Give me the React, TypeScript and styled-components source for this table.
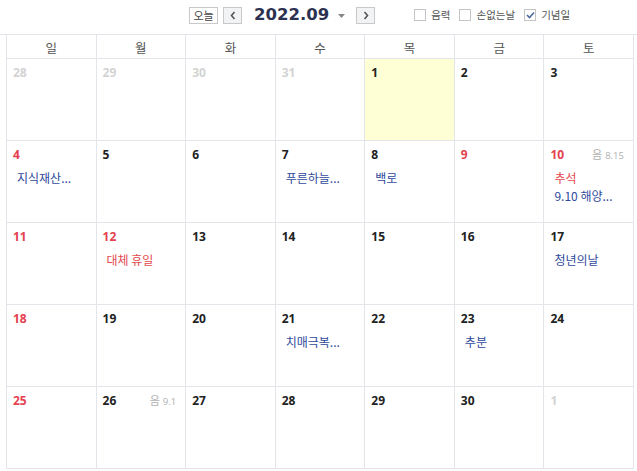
import React from 'react';
import styled, { createGlobalStyle } from 'styled-components';

const GlobalStyle = createGlobalStyle`
  html, body { margin: 0; padding: 0; background: #fff; }
  body { font-family: "Open Sans", "Noto Sans CJK KR", sans-serif; color: #222; }
  * { box-sizing: border-box; }
`;

const LINE = '#e3e5ea';

const Page = styled.div`
  width: 637px;
  height: 471px;
  overflow: hidden;
  background: #fff;
`;

const Toolbar = styled.div`
  height: 35px;
  padding: 0 0 4px 189px;
  border-bottom: 1px solid ${LINE};
  display: flex;
  align-items: center;
`;

const TodayButton = styled.button`
  width: 29px;
  height: 17px;
  padding: 0;
  border: 1px solid #c9c9c9;
  background: #fff;
  color: #444;
  font-family: "Noto Sans CJK KR", sans-serif;
  font-size: 11px;
  line-height: 15px;
`;

const NavButton = styled.button<{ $gap: number }>`
  width: 19px;
  height: 17px;
  padding: 0;
  margin-left: ${(p) => p.$gap}px;
  border: 1px solid #c9c9c9;
  background: #f2f3f5;
  display: flex;
  align-items: center;
  justify-content: center;
`;

const Title = styled.div`
  margin-left: 12px;
  display: flex;
  align-items: center;
  font-family: "DejaVu Sans", sans-serif;
  font-weight: bold;
  font-size: 16.5px;
  color: #2c3150;
  line-height: 20px;
`;

const Caret = styled.svg`
  margin-left: 9px;
  margin-top: 1px;
`;

const Checks = styled.div`
  margin-left: 39px;
  display: flex;
  align-items: center;
  gap: 9px;
`;

const CheckItem = styled.label`
  display: flex;
  align-items: center;
  gap: 5px;
  font-family: "Noto Sans CJK KR", sans-serif;
  font-size: 10.5px;
  color: #555;
  line-height: 14px;
`;

const Box = styled.span`
  width: 12px;
  height: 12px;
  border: 1px solid #c4c4c4;
  background: #fff;
  display: flex;
  align-items: center;
  justify-content: center;
`;

const Calendar = styled.div`
  margin-left: 6px;
  width: 628px;
  border-left: 1px solid ${LINE};
`;

const WeekHeader = styled.div`
  display: grid;
  grid-template-columns: repeat(7, 1fr);
  height: 24px;
  border-bottom: 1px solid ${LINE};
`;

const WeekDay = styled.div`
  border-right: 1px solid ${LINE};
  text-align: center;
  font-family: "Noto Sans CJK KR", sans-serif;
  font-size: 12.5px;
  color: #555;
  line-height: 25px;
`;

const Grid = styled.div`
  display: grid;
  grid-template-columns: repeat(7, 1fr);
  grid-auto-rows: 82px;
`;

const Cell = styled.div<{ $today?: boolean }>`
  border-right: 1px solid ${LINE};
  border-bottom: 1px solid ${LINE};
  background: ${(p) => (p.$today ? '#ffffd6' : '#fff')};
  padding: 5px 6px 0 6px;
  overflow: hidden;
`;

const NumberRow = styled.div`
  display: flex;
  justify-content: space-between;
  align-items: flex-start;
  height: 18px;
`;

type Tone = 'normal' | 'red' | 'other';

const DayNum = styled.span<{ $tone: Tone }>`
  font-family: "Open Sans", sans-serif;
  font-weight: bold;
  font-size: 12px;
  line-height: 18px;
  color: ${(p) => (p.$tone === 'red' ? '#e4424f' : p.$tone === 'other' ? '#d3d3d3' : '#222')};
`;

const Lunar = styled.span`
  margin-right: 3px;
  font-family: "Noto Sans CJK KR", sans-serif;
  font-size: 11px;
  line-height: 16px;
  color: #b0b0b0;
  display: flex;
  align-items: baseline;
  gap: 3px;
`;

const LunarDate = styled.span`
  font-family: "Open Sans", sans-serif;
  font-size: 9.5px;
`;

const Events = styled.div`
  margin-top: 5px;
  padding-left: 4px;
`;

const Event = styled.div<{ $red?: boolean }>`
  font-family: "Noto Sans CJK KR", sans-serif;
  font-size: 12px;
  line-height: 18px;
  white-space: nowrap;
  color: ${(p) => (p.$red ? '#e34a4f' : '#2f4a9c')};
`;

type Ev = { text: string; red?: boolean; full?: string };
type Day = { d: number; tone?: Tone; today?: boolean; lunar?: string; events?: Ev[] };

const weeks: Day[][] = [
  [
    { d: 28, tone: 'other' },
    { d: 29, tone: 'other' },
    { d: 30, tone: 'other' },
    { d: 31, tone: 'other' },
    { d: 1, today: true },
    { d: 2 },
    { d: 3 },
  ],
  [
    { d: 4, tone: 'red', events: [{ text: '지식재산...', full: '지식재산의 날' }] },
    { d: 5 },
    { d: 6 },
    { d: 7, events: [{ text: '푸른하늘...', full: '푸른하늘의 날' }] },
    { d: 8, events: [{ text: '백로' }] },
    { d: 9, tone: 'red' },
    {
      d: 10,
      tone: 'red',
      lunar: '8.15',
      events: [{ text: '추석', red: true }, { text: '9.10 해양...', full: '9.10 해양경찰의 날' }],
    },
  ],
  [
    { d: 11, tone: 'red' },
    { d: 12, tone: 'red', events: [{ text: '대체 휴일', red: true }] },
    { d: 13 },
    { d: 14 },
    { d: 15 },
    { d: 16 },
    { d: 17, events: [{ text: '청년의날' }] },
  ],
  [
    { d: 18, tone: 'red' },
    { d: 19 },
    { d: 20 },
    { d: 21, events: [{ text: '치매극복...', full: '치매극복의 날' }] },
    { d: 22 },
    { d: 23, events: [{ text: '추분' }] },
    { d: 24 },
  ],
  [
    { d: 25, tone: 'red' },
    { d: 26, lunar: '9.1' },
    { d: 27 },
    { d: 28 },
    { d: 29 },
    { d: 30 },
    { d: 1, tone: 'other' },
  ],
];

const dayNames = ['일', '월', '화', '수', '목', '금', '토'];

const Chevron = ({ dir }: { dir: 'left' | 'right' }) => (
  <svg width="6" height="9" viewBox="0 0 6 9">
    <polyline
      points={dir === 'left' ? '4.5,1 1.5,4.5 4.5,8' : '1.5,1 4.5,4.5 1.5,8'}
      fill="none"
      stroke="#555"
      strokeWidth="1.6"
    />
  </svg>
);

const Check = ({ checked, label }: { checked?: boolean; label: string }) => (
  <CheckItem>
    <Box>
      {checked && (
        <svg width="9" height="8" viewBox="0 0 9 8">
          <polyline points="1,4 3.5,6.5 8,1.5" fill="none" stroke="#4a6a9e" strokeWidth="1.6" />
        </svg>
      )}
    </Box>
    {label}
  </CheckItem>
);

export default function App() {
  return (
    <Page>
      <GlobalStyle />
      <Toolbar>
        <TodayButton>오늘</TodayButton>
        <NavButton $gap={5}>
          <Chevron dir="left" />
        </NavButton>
        <Title>
          2022.09
          <Caret width="7" height="4" viewBox="0 0 7 4">
            <polygon points="0,0 7,0 3.5,4" fill="#888" />
          </Caret>
        </Title>
        <NavButton $gap={11}>
          <Chevron dir="right" />
        </NavButton>
        <Checks>
          <Check label="음력" />
          <Check label="손없는날" />
          <Check label="기념일" checked />
        </Checks>
      </Toolbar>
      <Calendar>
        <WeekHeader>
          {dayNames.map((n) => (
            <WeekDay key={n}>{n}</WeekDay>
          ))}
        </WeekHeader>
        <Grid>
          {weeks.flat().map((day, i) => (
            <Cell key={i} $today={day.today}>
              <NumberRow>
                <DayNum $tone={day.tone ?? 'normal'}>{day.d}</DayNum>
                {day.lunar && (
                  <Lunar>
                    음<LunarDate>{day.lunar}</LunarDate>
                  </Lunar>
                )}
              </NumberRow>
              {day.events && (
                <Events>
                  {day.events.map((e, j) => (
                    <Event key={j} $red={e.red} title={e.full ?? e.text}>
                      {e.text}
                    </Event>
                  ))}
                </Events>
              )}
            </Cell>
          ))}
        </Grid>
      </Calendar>
    </Page>
  );
}
